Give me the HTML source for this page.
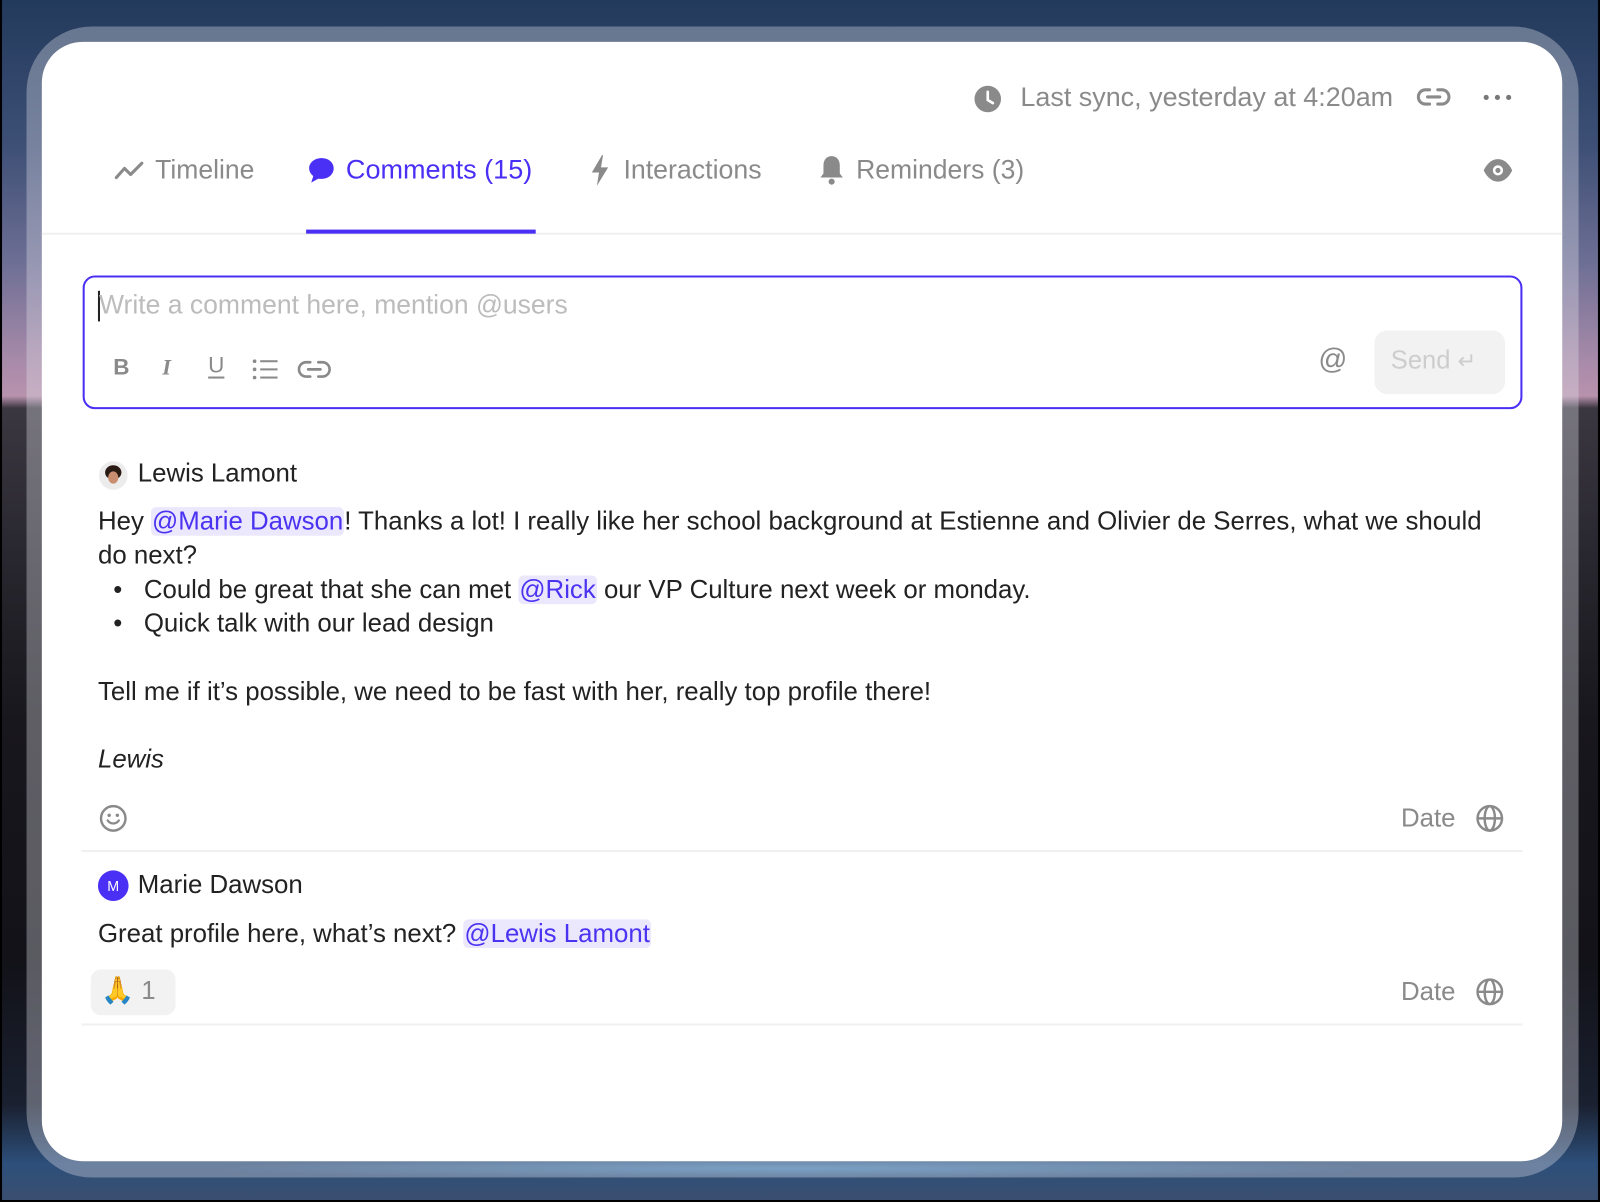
<!DOCTYPE html>
<html><head><meta charset="utf-8"><style>
*{margin:0;padding:0;box-sizing:border-box}
html,body{width:1600px;height:1202px;overflow:hidden;background:#000}
#root{position:absolute;left:0;top:0;width:1568px;height:1178px;transform:scale(1.0204);transform-origin:0 0;font-family:"Liberation Sans",sans-serif;overflow:hidden}
.bg{position:absolute;inset:0 2px 2px 2px;background:linear-gradient(180deg,#223a5c 0%,#3d4f75 12%,#6e6f95 22%,#a78aa9 30%,#b892ad 33%,#3b3740 34%,#2a2830 45%,#18171d 60%,#121218 80%,#1a2030 92%,#2d4f7a 97%,#3a4f70 100%)}
.frame{position:absolute;left:26px;top:26px;width:1521px;height:1128px;border-radius:64px;background:rgba(225,225,235,.35)}
.glow{position:absolute;left:200px;top:1135px;width:1160px;height:20px;background:radial-gradient(ellipse at center,rgba(130,180,220,.6),rgba(130,180,220,0) 70%)}
.card{position:absolute;left:41px;top:41px;width:1490px;height:1097px;border-radius:40px;background:#fff;overflow:hidden}
.abs{position:absolute}
.g{color:#8a8a8a}
.t{font-size:26px;white-space:nowrap}
.mention{background:#ebe7fd;color:#4b33f2;border-radius:5px;padding:0 1px}
.body{font-size:25.3px;color:#222;white-space:nowrap}
</style></head><body><div id="root">
<div class="bg"></div>
<div class="frame"></div>
<div class="glow"></div>
<div class="card">
 <svg class="abs" style="left:913px;top:42px" width="28" height="28" viewBox="0 0 28 28"><circle cx="14" cy="14" r="13" fill="#8a8a8a"/><path d="M14 7v8l5 3" stroke="#fff" stroke-width="2.6" fill="none" stroke-linecap="round"/></svg>
 <div class="abs t g" style="left:959px;top:39px;font-size:26.4px">Last sync, yesterday at 4:20am</div>
 <svg class="abs" style="left:1347px;top:43px" width="34" height="22" viewBox="0 0 34 22"><path d="M13 4H9a7 7 0 0 0 0 14h4M21 4h4a7 7 0 0 1 0 14h-4M11 11h12" stroke="#8a8a8a" stroke-width="3" fill="none" stroke-linecap="round"/></svg>
 <div class="abs" style="left:1413px;top:52px;width:30px;height:6px"><span style="position:absolute;left:0;width:5px;height:5px;border-radius:50%;background:#777"></span><span style="position:absolute;left:11px;width:5px;height:5px;border-radius:50%;background:#777"></span><span style="position:absolute;left:22px;width:5px;height:5px;border-radius:50%;background:#777"></span></div>

 <svg class="abs" style="left:71px;top:116px" width="30" height="20" viewBox="0 0 30 20"><path d="M2 17l8-9 6 6 11-11" stroke="#8a8a8a" stroke-width="3" fill="none" stroke-linecap="round" stroke-linejoin="round"/></svg>
 <div class="abs t g" style="left:111px;top:110px">Timeline</div>
 <svg class="abs" style="left:260px;top:112px" width="28" height="28" viewBox="0 0 28 28"><path d="M14 2C7 2 2 6.5 2 12c0 3 1.5 5.5 4 7.5L4 26l7-4c1 .2 2 .3 3 .3 7 0 12-4.5 12-10.3S21 2 14 2z" fill="#4a2ff5"/></svg>
 <div class="abs t" style="left:298px;top:110px;color:#4a2ff5;font-size:26.5px">Comments (15)</div>
 <svg class="abs" style="left:536px;top:110px" width="22" height="32" viewBox="0 0 22 32"><path d="M13 1L3 18h7l-2 13 11-18h-7l2-12z" fill="#8a8a8a"/></svg>
 <div class="abs t g" style="left:570px;top:110px;font-size:26.2px">Interactions</div>
 <svg class="abs" style="left:761px;top:110px" width="26" height="32" viewBox="0 0 26 32"><path d="M13 2c-5 0-8 4-8 9v8l-3 4h22l-3-4v-8c0-5-3-9-8-9z" fill="#8a8a8a"/><circle cx="13" cy="27" r="3" fill="#8a8a8a"/></svg>
 <div class="abs t g" style="left:798px;top:110px">Reminders (3)</div>
 <svg class="abs" style="left:1412px;top:113px" width="30" height="26" viewBox="0 0 30 26"><path d="M1 13C5 5 10 2 15 2s10 3 14 11c-4 8-9 11-14 11S5 21 1 13z" fill="#8a8a8a"/><circle cx="15" cy="13" r="5" fill="#fff"/><circle cx="15" cy="13" r="2.5" fill="#8a8a8a"/></svg>
 <div class="abs" style="left:0;top:187px;width:1490px;height:2px;background:#f0f0f0"></div>
 <div class="abs" style="left:259px;top:184px;width:225px;height:4px;background:#4a2ff5"></div>

 <div class="abs" style="left:40px;top:229px;width:1411px;height:131px;border:2px solid #4a2ff5;border-radius:12px"></div>
 <div class="abs" style="left:55px;top:244px;width:2px;height:30px;background:#222"></div>
 <div class="abs" style="left:56px;top:242px;font-size:26px;color:#bcbcbc;white-space:nowrap">Write a comment here, mention @users</div>
 <div class="abs" style="left:70px;top:306px;font-size:22px;font-weight:bold;color:#8a8a8a">B</div>
 <div class="abs" style="left:118px;top:306px;font-size:22px;font-style:italic;font-weight:bold;color:#8a8a8a;font-family:'Liberation Serif',serif">I</div>
 <div class="abs" style="left:163px;top:304px;font-size:22px;color:#8a8a8a;text-decoration:underline;text-underline-offset:4px">U</div>
 <svg class="abs" style="left:206px;top:310px" width="26" height="22" viewBox="0 0 26 22"><g fill="#8a8a8a"><circle cx="2.5" cy="3" r="1.8"/><circle cx="2.5" cy="11" r="1.8"/><circle cx="2.5" cy="19" r="1.8"/><rect x="8" y="2" width="17" height="2"/><rect x="8" y="10" width="17" height="2"/><rect x="8" y="18" width="17" height="2"/></g></svg>
 <svg class="abs" style="left:250px;top:310px" width="34" height="22" viewBox="0 0 34 22"><path d="M13 4H9a7 7 0 0 0 0 14h4M21 4h4a7 7 0 0 1 0 14h-4M11 11h12" stroke="#8a8a8a" stroke-width="2.6" fill="none" stroke-linecap="round"/></svg>
 <div class="abs" style="left:1251px;top:295px;font-size:28px;color:#8a8a8a">@</div>
 <div class="abs" style="left:1306px;top:283px;width:128px;height:62px;border-radius:12px;background:#f2f2f2"></div>
 <div class="abs" style="left:1322px;top:298px;font-size:25px;color:#cdcdcd;white-space:nowrap">Send <span style="font-size:22px">↵</span></div>

 <div class="abs" style="left:56px;top:411px;width:28px;height:28px;border-radius:50%;background:#ececec;overflow:hidden"><div style="position:absolute;left:6px;top:4px;width:16px;height:14px;border-radius:50%;background:#2a1a14"></div><div style="position:absolute;left:9px;top:10px;width:10px;height:12px;border-radius:50%;background:#c98e70"></div></div>
 <div class="abs body" style="left:94px;top:409px">Lewis Lamont</div>
 <div class="abs body" style="left:55px;top:456px">Hey <span class="mention">@Marie Dawson</span>! Thanks a lot! I really like her school background at Estienne and Olivier de Serres, what we should</div>
 <div class="abs body" style="left:55px;top:489px">do next?</div>
 <div class="abs body" style="left:70px;top:523px">•&nbsp;&nbsp; Could be great that she can met <span class="mention">@Rick</span> our VP Culture next week or monday.</div>
 <div class="abs body" style="left:70px;top:556px">•&nbsp;&nbsp; Quick talk with our lead design</div>
 <div class="abs body" style="left:55px;top:623px">Tell me if it’s possible, we need to be fast with her, really top profile there!</div>
 <div class="abs body" style="left:55px;top:689px;font-style:italic">Lewis</div>
 <svg class="abs" style="left:56px;top:747px" width="28" height="28" viewBox="0 0 28 28"><circle cx="14" cy="14" r="12" stroke="#8a8a8a" stroke-width="2.4" fill="none"/><circle cx="10" cy="11" r="1.7" fill="#8a8a8a"/><circle cx="18" cy="11" r="1.7" fill="#8a8a8a"/><path d="M8.5 16c2.5 4 8.5 4 11 0" stroke="#8a8a8a" stroke-width="2.2" fill="none" stroke-linecap="round"/></svg>
 <div class="abs body" style="left:1332px;top:747px;color:#8a8a8a">Date</div>
 <svg class="abs" style="left:1405px;top:747px" width="28" height="28" viewBox="0 0 28 28"><g stroke="#8a8a8a" stroke-width="2.4" fill="none"><circle cx="14" cy="14" r="12"/><ellipse cx="14" cy="14" rx="5" ry="12"/><path d="M2 14h24"/></g></svg>
 <div class="abs" style="left:39px;top:792px;width:1412px;height:2px;background:#f0f0f0"></div>

 <div class="abs" style="left:55px;top:812px;width:30px;height:30px;border-radius:50%;background:#4a2ff5;color:#fff;font-size:14px;text-align:center;line-height:30px">M</div>
 <div class="abs body" style="left:94px;top:812px">Marie Dawson</div>
 <div class="abs body" style="left:55px;top:860px">Great profile here, what’s next? <span class="mention">@Lewis Lamont</span></div>
 <div class="abs" style="left:48px;top:909px;width:83px;height:45px;border-radius:10px;background:#f2f2f2"></div>
 <div class="abs" style="left:58px;top:914px;font-size:26px;white-space:nowrap">🙏 <span style="color:#8a8a8a;font-size:25px">1</span></div>
 <div class="abs body" style="left:1332px;top:917px;color:#8a8a8a">Date</div>
 <svg class="abs" style="left:1405px;top:917px" width="28" height="28" viewBox="0 0 28 28"><g stroke="#8a8a8a" stroke-width="2.4" fill="none"><circle cx="14" cy="14" r="12"/><ellipse cx="14" cy="14" rx="5" ry="12"/><path d="M2 14h24"/></g></svg>
 <div class="abs" style="left:39px;top:962px;width:1412px;height:2px;background:#f0f0f0"></div>
</div>
</div></body></html>
